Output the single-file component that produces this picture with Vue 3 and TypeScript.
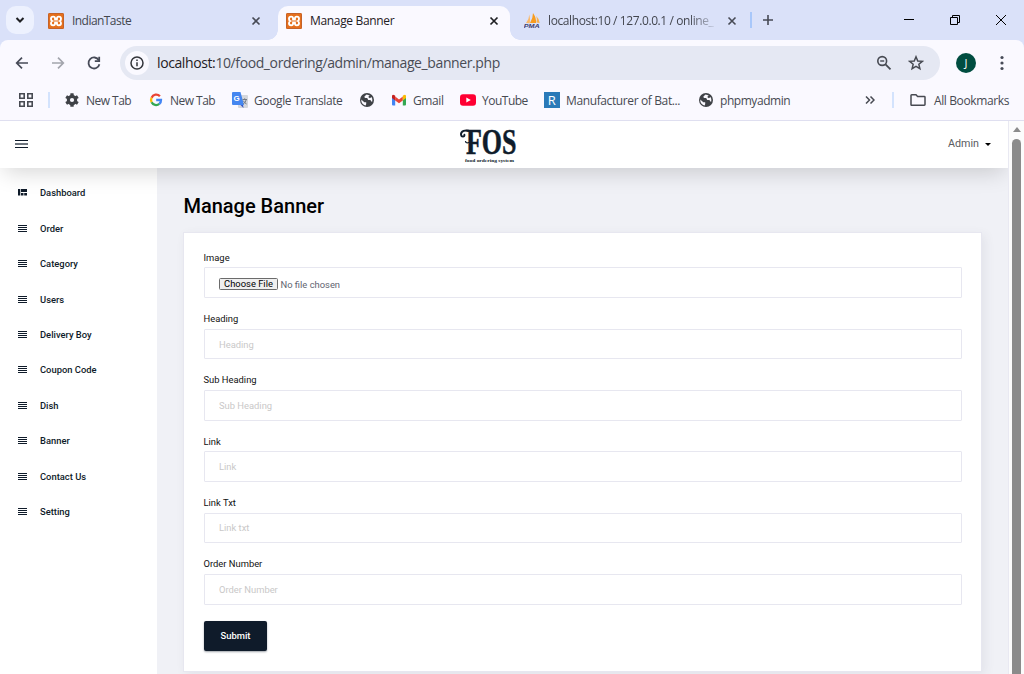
<script setup lang="ts">
interface Bookmark {
  id: string
  label: string
  icon: 'gear' | 'google' | 'translate' | 'globe' | 'gmail' | 'youtube' | 'letter'
}

interface Field {
  label: string
  placeholder: string
}

const bookmarks: Bookmark[] = [
  { id: 'new-tab', label: 'New Tab', icon: 'gear' },
  { id: 'google', label: 'New Tab', icon: 'google' },
  { id: 'translate', label: 'Google Translate', icon: 'translate' },
  { id: 'blank', label: '', icon: 'globe' },
  { id: 'gmail', label: 'Gmail', icon: 'gmail' },
  { id: 'youtube', label: 'YouTube', icon: 'youtube' },
  { id: 'maker', label: 'Manufacturer of Bat...', icon: 'letter' },
  { id: 'pma', label: 'phpmyadmin', icon: 'globe' },
]

const menu: string[] = [
  'Dashboard', 'Order', 'Category', 'Users', 'Delivery Boy',
  'Coupon Code', 'Dish', 'Banner', 'Contact Us', 'Setting',
]

const fields: Field[] = [
  { label: 'Heading', placeholder: 'Heading' },
  { label: 'Sub Heading', placeholder: 'Sub Heading' },
  { label: 'Link', placeholder: 'Link' },
  { label: 'Link Txt', placeholder: 'Link txt' },
  { label: 'Order Number', placeholder: 'Order Number' },
]
</script>

<template>
  <div class="window">
    <header class="tabstrip">
      <button class="tab-search" aria-label="Search tabs">
        <svg width="10" height="8" viewBox="0 0 10 8"><path d="M1.5 2 L5 5.5 L8.500 2" fill="none" stroke="#1f2024" stroke-width="2" /></svg>
      </button>
      <div class="tab first">
        <svg class="fav" viewBox="0 0 16 16">
          <rect width="16" height="16" rx="1.500" fill="#e56f1c" /><rect x=".5" y=".5" width="15" height="15" rx="1" fill="none" stroke="#c4622a" />
          <path d="M5.200 3.600 C3.600 3.600 3 4.400 3 5.700 C3 7 3.400 7.600 4.200 8 C3.400 8.400 3 9 3 10.300 C3 11.700 3.700 12.400 5.200 12.400 C6.500 12.400 7.100 11.500 7.100 10.300 V9.400 H8.900 V10.300 C8.900 11.500 9.500 12.400 10.800 12.400 C12.300 12.400 13 11.700 13 10.300 C13 9 12.600 8.400 11.800 8 C12.600 7.600 13 7 13 5.700 C13 4.400 12.400 3.600 10.800 3.600 C9.500 3.600 8.900 4.500 8.900 5.700 V6.600 H7.100 V5.700 C7.100 4.500 6.500 3.600 5.200 3.600 Z" fill="none" stroke="#fff" stroke-width="1.900" />
        </svg>
        <span class="tab-title t1">IndianTaste</span>
        <svg class="close" viewBox="0 0 10 10"><path d="M1.500 1.500 L8.500 8.500 M8.500 1.500 L1.500 8.500" stroke="#474a55" stroke-width="1.600" /></svg>
      </div>
      <div class="tab active">
        <svg class="fav" viewBox="0 0 16 16">
          <rect width="16" height="16" rx="1.500" fill="#e56f1c" /><rect x=".5" y=".5" width="15" height="15" rx="1" fill="none" stroke="#c4622a" />
          <path d="M5.200 3.600 C3.600 3.600 3 4.400 3 5.700 C3 7 3.400 7.600 4.200 8 C3.400 8.400 3 9 3 10.300 C3 11.700 3.700 12.400 5.200 12.400 C6.500 12.400 7.100 11.500 7.100 10.300 V9.400 H8.900 V10.300 C8.900 11.500 9.500 12.400 10.800 12.400 C12.300 12.400 13 11.700 13 10.300 C13 9 12.600 8.400 11.800 8 C12.600 7.600 13 7 13 5.700 C13 4.400 12.400 3.600 10.800 3.600 C9.500 3.600 8.900 4.500 8.900 5.700 V6.600 H7.100 V5.700 C7.100 4.500 6.500 3.600 5.200 3.600 Z" fill="none" stroke="#fff" stroke-width="1.900" />
        </svg>
        <span class="tab-title t2">Manage Banner</span>
        <svg class="close" viewBox="0 0 10 10"><path d="M1.500 1.500 L8.500 8.500 M8.500 1.500 L1.500 8.500" stroke="#1f2024" stroke-width="1.700" /></svg>
      </div>
      <div class="tab third">
        <svg class="fav" viewBox="0 0 16 16">
          <path d="M2 10 Q5.200 6 5.300 1.500 Q6.500 6 5.800 10.300 Z" fill="#fbb867" />
          <path d="M6 10 Q9 5 9 0 Q12.500 5 12 10 Z" fill="#f89c1e" />
          <path d="M12.500 9.500 Q13.500 6 12.200 3 Q15.500 6 15.700 10 Z" fill="#f9b04c" />
          <text x="-.2" y="15" class="pma" textLength="16" lengthAdjust="spacingAndGlyphs">PMA</text>
        </svg>
        <span class="tab-title t3">localhost:10 / 127.0.0.1 / online_</span>
        <svg class="close" viewBox="0 0 10 10"><path d="M1.500 1.500 L8.500 8.500 M8.500 1.500 L1.500 8.500" stroke="#474a55" stroke-width="1.600" /></svg>
      </div>
      <i class="tab-divider"></i>
      <svg class="plus" viewBox="0 0 10 10"><path d="M5 0 V10 M0 5 H10" stroke="#474a55" stroke-width="1.600" /></svg>
      <div class="controls">
        <svg width="12" height="12" viewBox="0 0 12 12"><path d="M1 5.500 H11" stroke="#000" /></svg>
        <svg width="12" height="12" viewBox="0 0 12 12"><path d="M1.500 3.500 H8.500 V10.500 H1.500 Z M3.500 3.500 V1.500 H10.500 V8.500 H8.500" fill="none" stroke="#000" /></svg>
        <svg width="12" height="12" viewBox="0 0 12 12"><path d="M1 1 L11 11 M11 1 L1 11" stroke="#000" stroke-width="1" /></svg>
      </div>
    </header>

    <section class="chrome">
      <div class="toolbar">
        <svg class="nav" viewBox="0 0 16 16"><path d="M14 8 H3 M8 2.700 L2.700 8 L8 13.300" fill="none" stroke="#474b58" stroke-width="1.700" /></svg>
        <svg class="nav" viewBox="0 0 16 16"><path d="M2 8 H13 M8 2.700 L13.300 8 L8 13.300" fill="none" stroke="#a3a5ad" stroke-width="1.700" /></svg>
        <svg class="nav reload" viewBox="0 0 16 16"><path d="M12.800 5.200 A5.500 5.500 0 1 0 13.400 9.200" fill="none" stroke="#474b58" stroke-width="1.800" /><path d="M13.200 1.800 V6.200 H8.800" fill="none" stroke="#474b58" stroke-width="1.800" /></svg>
        <div class="omnibox">
          <span class="info">
            <svg width="14" height="14" viewBox="0 0 14 14"><circle cx="7" cy="7" r="6" fill="none" stroke="#33353b" stroke-width="1.500" /><path d="M7 6.200 V10.300 M7 3.600 V5.100" stroke="#33353b" stroke-width="1.500" /></svg>
          </span>
          <span class="url"><b>localhost:</b>10/food_ordering/admin/manage_banner.php</span>
          <svg class="zoomout" viewBox="0 0 16 16"><circle cx="6.200" cy="6" r="4.400" fill="none" stroke="#474a52" stroke-width="1.600" /><path d="M9.500 9.300 L14.500 14.300" stroke="#474a52" stroke-width="1.800" /><path d="M4.200 6 H8.200" stroke="#474a52" stroke-width="1.400" /></svg>
          <svg class="star" viewBox="0 0 16 16"><path d="M8 1.800 L9.750 6 L14.300 6.350 L10.850 9.300 L11.900 13.750 L8 11.350 L4.100 13.750 L5.150 9.300 L1.700 6.350 L6.250 6 Z" fill="none" stroke="#474a52" stroke-width="1.500" /></svg>
        </div>
        <span class="avatar">J</span>
        <svg class="dots" viewBox="0 0 4 16"><circle cx="2" cy="2.500" r="1.600" fill="#474b58" /><circle cx="2" cy="8" r="1.600" fill="#474b58" /><circle cx="2" cy="13.500" r="1.600" fill="#474b58" /></svg>
      </div>

      <nav class="bookmarks">
        <svg class="apps" viewBox="0 0 14 14"><path d="M.8 .8 H5.200 V5.200 H.8 Z M8.800 .8 H13.200 V5.200 H8.800 Z M.8 8.800 H5.200 V13.200 H.8 Z M8.800 8.800 H13.200 V13.200 H8.800 Z" fill="none" stroke="#474a52" stroke-width="1.600" /></svg>
        <i class="bar"></i>
        <a v-for="b in bookmarks" :key="b.id" class="bookmark" :class="`bm-${b.id}`">
          <svg v-if="b.icon === 'gear'" viewBox="0 0 16 16">
            <g fill="#3f4247"><circle cx="8" cy="8" r="5.200" /><rect x="6.300" y="1.200" width="3.400" height="13.600" rx=".6" /><rect x="6.300" y="1.200" width="3.400" height="13.600" rx=".6" transform="rotate(60 8 8)" /><rect x="6.300" y="1.200" width="3.400" height="13.600" rx=".6" transform="rotate(120 8 8)" /></g>
            <circle cx="8" cy="8" r="2.100" fill="#faf9ff" />
          </svg>
          <svg v-else-if="b.icon === 'google'" viewBox="0 0 16 16">
            <g fill="none" stroke-width="2.300"><path d="M11.900 4.300 A5 5 0 0 0 3.600 5.700" stroke="#ea4335" /><path d="M3.600 5.700 A5 5 0 0 0 3.600 10.300" stroke="#fbbc05" /><path d="M3.600 10.300 A5 5 0 0 0 11.300 11.900" stroke="#34a853" /><path d="M11.300 11.900 A5 5 0 0 0 13 8 H8.200" stroke="#4285f4" /></g>
          </svg>
          <svg v-else-if="b.icon === 'translate'" viewBox="0 0 16 16">
            <rect x="6" y="3" width="10" height="13" rx="1" fill="#d5d7dc" /><path d="M8.500 13 L11.500 16 L11 12.500 Z" fill="#3457c4" />
            <path d="M1 0 H8.500 L12 13 H1 Q0 13 0 12 V1 Q0 0 1 0 Z" fill="#4486f0" />
            <path d="M10.500 7.500 H15 M12.700 6.300 V7.500 M14.300 7.500 Q13.500 10.500 11.300 12 M11.300 8.700 Q12.500 11 14.600 12" fill="none" stroke="#747b84" />
            <text x="1.500" y="9.200" class="gt">G</text>
          </svg>
          <svg v-else-if="b.icon === 'globe'" viewBox="0 0 16 16">
            <circle cx="8" cy="8" r="7" fill="#3f4247" />
            <path d="M2.300 7.500 L5.300 10.300 H7.200 V12 L6.700 13.500 Q3.200 12.700 2.400 9.500 Z M7.600 2.600 L5.600 4.300 Q4.800 5.600 6.300 6.100 H8.200 L9.200 8 H11.500 L12.200 9.500 H13.300 Q13.800 6.800 12.500 4.900 L10.900 6.200 L9.200 5 L10.700 3.400 Z" fill="#faf9ff" />
          </svg>
          <svg v-else-if="b.icon === 'gmail'" viewBox="0 0 16 16">
            <path d="M1 3.500 V12.500 Q1 13.500 2 13.500 H4.200 V7 Z" fill="#4285f4" /><path d="M15 3.500 V12.500 Q15 13.500 14 13.500 H11.800 V7 Z" fill="#34a853" />
            <path d="M4.200 4.500 L8 7.400 L11.800 4.500 V8.500 L8 11.300 L4.200 8.500 Z" fill="#ea4335" /><path d="M1 4 Q1.500 1.800 3.500 3.200 L4.200 3.800 V8.500 L1 6 Z" fill="#c5221f" /><path d="M15 4 Q14.500 1.800 12.500 3.200 L11.800 3.800 V8.500 L15 6 Z" fill="#fbbc04" />
          </svg>
          <svg v-else-if="b.icon === 'youtube'" viewBox="0 0 16 16"><rect y="2.300" width="16" height="11.400" rx="3" fill="#ff0033" /><path d="M6.300 5.500 L10.800 8 L6.300 10.500 Z" fill="#fff" /></svg>
          <svg v-else viewBox="0 0 16 16"><rect width="16" height="16" fill="#2a7ab8" /><text x="3.800" y="12.700" class="rr">R</text></svg>
          <span v-if="b.label">{{ b.label }}</span>
        </a>
        <svg class="more" viewBox="0 0 10 8"><path d="M1 .5 L4.500 4 L1 7.500 M5.500 .5 L9 4 L5.500 7.500" fill="none" stroke="#474a52" stroke-width="1.500" /></svg>
        <i class="bar"></i>
        <a class="bookmark bm-all">
          <svg viewBox="0 0 16 16"><path d="M1.700 2.800 H6 L7.600 4.500 H14.300 Q15 4.500 15 5.200 V12.600 Q15 13.300 14.300 13.300 H1.700 Q1 13.300 1 12.600 V3.500 Q1 2.800 1.700 2.800 Z" fill="none" stroke="#474a52" stroke-width="1.500" /></svg>
          <span>All Bookmarks</span>
        </a>
      </nav>
    </section>

    <div class="viewport">
      <div class="page">
        <header class="topbar">
          <svg class="burger" viewBox="0 0 13 8"><path d="M0 .5 H13 M0 7.500 H13" stroke="#0f1b2a" /><path d="M0 4 H13" stroke="#6d747d" stroke-width="2" /></svg>
          <svg class="logo" viewBox="0 0 60 36">
            <path d="M12 3.700 C6 .8 1.600 3.600 2 6.800 C2.400 9.300 5.900 9 5.400 6.700" fill="none" stroke="#0f1c2b" stroke-width="1.900" stroke-linecap="round" />
            <path d="M6.500 13.500 Q7 15.500 10 14.500" fill="none" stroke="#0f1c2b" stroke-width="1.200" stroke-linecap="round" />
            <text x="7" y="25.500" class="fos" textLength="50.500" lengthAdjust="spacingAndGlyphs">FOS</text>
            <text x="6" y="34" class="tag" textLength="49" lengthAdjust="spacingAndGlyphs">food ordering system</text>
          </svg>
          <div class="account"><span>Admin</span><i></i></div>
        </header>
        <div class="columns">
          <aside class="sidebar">
            <a v-for="(item, i) in menu" :key="item" class="menu-item">
              <svg v-if="i === 0" viewBox="0 0 9 7"><path d="M0 0 H2.300 V6.500 H0 Z M3 0 H9 V3 H3 Z M3 4 H5.500 V6.500 H3 Z M6.200 4 H9 V6.500 H6.200 Z" fill="#0f1b2a" /></svg>
              <svg v-else viewBox="0 0 9 7"><path d="M0 .5 H9 M0 2.500 H9 M0 4.500 H9 M0 6.500 H9" stroke="#0f1b2a" /></svg>
              <span>{{ item }}</span>
            </a>
          </aside>
          <main class="content">
            <h1>Manage Banner</h1>
            <form class="card" @submit.prevent>
              <div class="group">
                <label>Image</label>
                <div class="control file"><button type="button">Choose File</button><span>No file chosen</span></div>
              </div>
              <div v-for="f in fields" :key="f.label" class="group">
                <label>{{ f.label }}</label>
                <input class="control" type="text" :placeholder="f.placeholder" />
              </div>
              <button class="submit" type="submit">Submit</button>
            </form>
          </main>
        </div>
      </div>
      <div class="scrollbar"><i class="up"></i><i class="thumb"></i></div>
    </div>
  </div>
</template>

<style>
body { margin: 0; overflow: hidden; }
</style>

<style scoped>
* { box-sizing: border-box; }
svg { display: block; flex: none; }
.window { width: 1024px; height: 674px; display: flex; flex-direction: column; overflow: hidden; background: #dae1f9; font-family: "Open Sans", "Noto Sans", sans-serif; }

.tabstrip { height: 40px; flex: none; display: flex; align-items: flex-start; background: #dae1f9; }
.tab-search { width: 28px; height: 28px; margin: 6px 0 0 6px; padding: 0; border: 0; border-radius: 10px; background: #edf1fe; display: flex; align-items: center; justify-content: center; }
.tab { height: 34px; margin-top: 6px; display: flex; align-items: center; padding: 0 11px 5px 8px; position: relative; }
.tab.first { width: 238px; margin-left: 6px; }
.tab.active { width: 232px; background: #faf9ff; border-radius: 10px 10px 0 0; }
.tab.active::before, .tab.active::after { content: ""; position: absolute; bottom: 0; width: 10px; height: 10px; }
.tab.active::before { left: -10px; background: radial-gradient(circle at 0 0, transparent 9.500px, #faf9ff 10px); }
.tab.active::after { right: -10px; background: radial-gradient(circle at 100% 0, transparent 9.500px, #faf9ff 10px); }
.tab.third { width: 240px; padding: 0 13px 5px 14px; }
.fav { width: 16px; height: 16px; margin-right: 8px; }
.pma { font: italic bold 5.600px "Liberation Sans", sans-serif; fill: #3d4070; }
.tab-title { flex: 1; min-width: 0; font-size: 12px; line-height: 16px; color: #43464f; white-space: nowrap; padding-top: 1px; }
.t1 { letter-spacing: -.55px; }
.t2 { color: #1f2024; letter-spacing: -.33px; }
.t3 { margin-right: 10px; letter-spacing: -.4px; -webkit-mask-image: linear-gradient(to right, #000 84%, transparent 101%); mask-image: linear-gradient(to right, #000 84%, transparent 101%); }
.close { width: 10px; height: 10px; }
.tab.first .close { margin-right: 6px; }
.tab-divider { width: 2px; height: 16px; margin: 12px 0 0; background: #a8c7fa; }
.plus { width: 10px; height: 10px; margin: 15px 0 0 11px; }
.controls { margin: 14px 17px 0 auto; display: flex; gap: 34px; }

.chrome { height: 81px; flex: none; background: #faf9ff; border-radius: 8px 8px 0 0; border-bottom: 1px solid #dfdff0; }
.toolbar { height: 46px; display: flex; align-items: center; padding-left: 14px; }
.nav { width: 16px; height: 16px; margin-right: 20px; }
.reload { margin-right: 18px; }
.omnibox { width: 820px; height: 34px; border-radius: 17px; background: #e5e8f3; display: flex; align-items: center; padding-left: 5px; }
.info { width: 24px; height: 24px; border-radius: 50%; background: #faf9ff; display: flex; align-items: center; justify-content: center; margin-right: 8px; flex: none; }
.url { font-size: 14px; letter-spacing: -.395px; color: #494c55; white-space: nowrap; flex: 1; line-height: 20px; }
.url b { font-weight: 400; color: #1f2024; }
.zoomout { width: 16px; height: 16px; margin-right: 16px; }
.star { width: 16px; height: 16px; margin-right: 16px; }
.avatar { width: 20px; height: 20px; margin-left: 16px; border-radius: 50%; background: #004d40; color: #fff; font-size: 11px; line-height: 20px; text-align: center; }
.dots { width: 4px; height: 16px; margin-left: 24px; }

.bookmarks { height: 28px; display: flex; align-items: center; padding-left: 19px; font-size: 12px; letter-spacing: -.38px; color: #474a52; }
.apps { width: 14px; height: 14px; }
.bar { width: 2px; height: 16px; margin-left: 15px; background: #d3e3fd; }
.bookmark { display: flex; align-items: center; gap: 6px; height: 16px; white-space: nowrap; }
.bookmark svg { width: 16px; height: 16px; }
.bm-new-tab { width: 84px; margin-left: 14px; letter-spacing: -.52px; }
.bm-google { width: 84px; letter-spacing: -.52px; }
.bm-translate { width: 127px; }
.bm-blank { width: 32px; }
.bm-gmail { width: 69px; }
.bm-youtube { width: 84px; letter-spacing: -.5px; }
.bm-maker { width: 154px; }
.bm-pma { width: 167px; letter-spacing: -.45px; }
.bm-all { margin-left: 16px; gap: 8px; }
.more { width: 10px; height: 8px; }
.more + .bar { margin-left: 17px; }
.gt { font: bold 8px "Liberation Sans", sans-serif; fill: #fff; }
.rr { font: 13px "Open Sans", sans-serif; fill: #fff; letter-spacing: 0; }

.viewport { flex: 1; min-height: 0; display: flex; font-family: Roboto, sans-serif; }
.page { width: 1009px; display: flex; flex-direction: column; background: #f0f1f6; overflow: hidden; border-right: 1px solid #e9e9f2; }
.topbar { height: 47px; flex: none; background: #fff; display: flex; align-items: center; position: relative; z-index: 1; padding-left: 15px; box-shadow: 0 8px 22px -4px rgba(0, 0, 0, .17); }
.burger { width: 13px; height: 8px; margin-top: -1px; }
.logo { width: 60px; height: 36px; margin-left: 431px; margin-top: 3px; overflow: visible; }
.fos { font: bold 35px "Liberation Serif", serif; fill: #0f1c2b; stroke: #0f1c2b; stroke-width: .5; }
.tag { font: bold 5px "Liberation Serif", serif; fill: #0f1c2b; }
.account { margin-left: auto; margin-right: 17px; display: flex; align-items: center; gap: 6px; font-size: 10.720px; color: #5a5b60; margin-top: -3px; }
.account i { margin-top: 2px; border: 3px solid transparent; border-top-color: #000; border-bottom: 0; }
.columns { flex: 1; min-height: 0; display: flex; }
.sidebar { width: 157px; flex: none; background: #fff; padding-top: 7px; }
.menu-item { height: 35.440px; display: flex; align-items: center; padding-left: 18px; font-size: 9.380px; font-weight: 500; color: #0f1b2a; }
.menu-item svg { width: 9px; height: 7px; margin-right: 13px; }

.content { flex: 1; padding: 24px 26px 0; }
h1 { margin: 0 0 0 .4px; font-size: 20px; line-height: 28px; font-weight: 500; color: #000; }
.card { width: 799px; height: 440px; margin-top: 12px; padding: 19.800px 20px 0; background: #fff; border: 1px solid #e7e7f0; box-shadow: 3px 3px 10px rgba(60, 60, 90, .08); }
.group { height: 61.300px; }
label { display: block; height: 14.600px; margin-left: -.5px; font-size: 9.380px; line-height: 10px; color: #111; }
.control { display: flex; align-items: center; width: 758px; height: 30.700px; border: 1px solid #e7e7f0; padding: 0 14px; background: #fff; border-radius: 1px; font: 400 9.380px Roboto, sans-serif; color: #5f6470; outline: none; }
.control::placeholder { color: #c9c8c8; opacity: 1; }
.file { padding-top: 3px; }
.file button { height: 12px; width: 59px; padding: 0; margin: -1px 2.500px 0 0; border: 1px solid #6b6b6b; border-radius: 1.500px; background: #efefef; font: 400 9.380px/10px Roboto, sans-serif; color: #000; }
.submit { width: 63px; height: 30px; padding: 0; border: 0; border-radius: 2px; background: #0f1b2a; color: #fff; font: 500 9.380px Roboto, sans-serif; box-shadow: 0 1px 2px rgba(15, 27, 42, .4); display: block; }

.scrollbar { width: 15px; background: #fcfcfc; display: flex; flex-direction: column; align-items: center; }
.up { margin-top: 6px; border: 4.500px solid transparent; border-bottom: 5px solid #8b8b8b; border-top: 0; }
.thumb { width: 9px; flex: 1; margin-top: 7px; border-radius: 5px 5px 0 0; background: #8b8b8b; }
</style>
